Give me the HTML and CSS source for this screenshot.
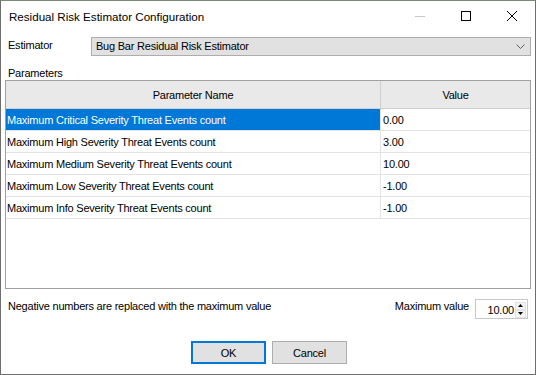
FILE: index.html
```html
<!DOCTYPE html>
<html>
<head>
<meta charset="utf-8">
<link rel="stylesheet" href="styles.css">
</head>
<body>
<div class="window">
  <div class="titlebar">
    <div class="title">Residual Risk Estimator Configuration</div>
    <div class="caption">
      <div class="cbtn min"><svg width="10" height="10" viewBox="0 0 10 10"><line x1="0" y1="5.5" x2="10" y2="5.5" stroke="#c8c8c8" stroke-width="1"/></svg></div>
      <div class="cbtn max"><svg width="10" height="10" viewBox="0 0 10 10"><rect x="0.5" y="0.5" width="9" height="9" fill="none" stroke="#000" stroke-width="1"/></svg></div>
      <div class="cbtn close"><svg width="10" height="10" viewBox="0 0 10 10"><path d="M0 0L10 10M10 0L0 10" stroke="#000" stroke-width="1"/></svg></div>
    </div>
  </div>
  <div class="content">
    <div class="est-row">
      <div class="est-label">Estimator</div>
      <div class="combo">
        <span class="combo-text">Bug Bar Residual Risk Estimator</span>
        <svg class="chev" width="9" height="5" viewBox="0 0 9 5"><path d="M0.5 0.5L4.5 4.5L8.5 0.5" fill="none" stroke="#606060" stroke-width="1"/></svg>
      </div>
    </div>
    <div class="params-label">Parameters</div>
    <div class="grid">
      <div class="ghead">
        <div class="hc name">Parameter Name</div>
        <div class="hc val">Value</div>
      </div>
      <div class="grow sel">
        <div class="c name">Maximum Critical Severity Threat Events count</div>
        <div class="c val">0.00</div>
      </div>
      <div class="grow">
        <div class="c name">Maximum High Severity Threat Events count</div>
        <div class="c val">3.00</div>
      </div>
      <div class="grow">
        <div class="c name">Maximum Medium Severity Threat Events count</div>
        <div class="c val">10.00</div>
      </div>
      <div class="grow">
        <div class="c name">Maximum Low Severity Threat Events count</div>
        <div class="c val">-1.00</div>
      </div>
      <div class="grow">
        <div class="c name">Maximum Info Severity Threat Events count</div>
        <div class="c val">-1.00</div>
      </div>
    </div>
    <div class="bottom-row">
      <div class="note">Negative numbers are replaced with the maximum value</div>
      <div class="maxval">
        <span class="mv-label">Maximum value</span>
        <div class="spin">
          <span class="spin-text">10.00</span>
          <div class="spin-btns">
            <div class="sb"><svg width="5" height="3" viewBox="0 0 5 3"><path d="M2.5 0L5 3H0Z" fill="#000"/></svg></div>
            <div class="sb"><svg width="5" height="3" viewBox="0 0 5 3"><path d="M0 0H5L2.5 3Z" fill="#000"/></svg></div>
          </div>
        </div>
      </div>
    </div>
    <div class="buttons">
      <div class="btn default">OK</div>
      <div class="btn">Cancel</div>
    </div>
  </div>
</div>
</body>
</html>
```
FILE: styles.css
```css
* { box-sizing: border-box; }
html, body { margin: 0; padding: 0; }
body {
  width: 536px;
  height: 375px;
  overflow: hidden;
  background: #3c5a3c;
  font-family: "Liberation Sans", Arial, sans-serif;
  font-size: 11px;
  letter-spacing: -0.22px;
  color: #000;
}
.window {
  width: 536px;
  height: 375px;
  background: #fff;
  border-left: 1px solid #6e6e6e;
  border-right: 1px solid #6e6e6e;
  border-bottom: 1px solid #6e6e6e;
  border-top: 1px solid #7a8a7a;
  display: flex;
  flex-direction: column;
}
.titlebar {
  height: 29px;
  display: flex;
  align-items: stretch;
  justify-content: space-between;
}
.title {
  padding-left: 8px;
  padding-top: 8px;
  font-size: 11.6px;
  letter-spacing: 0;
  line-height: 15px;
}
.caption { display: flex; }
.cbtn {
  width: 46px;
  display: flex;
  align-items: center;
  justify-content: center;
}
.cbtn svg { display: block; }
.content {
  flex: 1;
  display: flex;
  flex-direction: column;
  padding: 0 4px;
}
.est-row {
  display: flex;
  align-items: flex-start;
  margin-top: 7px;
  height: 20px;
}
.est-label {
  width: 86px;
  padding-left: 3px;
  line-height: 15px;
  padding-top: 1px;
}
.combo {
  flex: 1;
  height: 19px;
  background: #e1e1e1;
  border: 1px solid #adadad;
  display: flex;
  align-items: center;
  justify-content: space-between;
  padding: 0 5px 0 4px;
}
.combo-text { line-height: 15px; }
.chev { display: block; }
.params-label {
  margin-top: 9px;
  margin-bottom: 1px;
  padding-left: 3px;
  line-height: 15px;
  height: 15px;
}
.grid {
  margin-top: -2px;
  height: 209px;
  border: 1px solid #a0a0a0;
  background: #fff;
}
.ghead {
  display: flex;
  height: 28px;
  background: #e9e9e9;
  border-bottom: 1px solid #cfcfcf;
}
.hc {
  display: flex;
  align-items: center;
  justify-content: center;
}
.name { width: 375px; }
.val { flex: 1; }
.hc.name { border-right: 1px solid #cfcfcf; }
.grow {
  display: flex;
  height: 22px;
  border-bottom: 1px solid #e3e3e3;
}
.c {
  display: flex;
  align-items: center;
  padding-left: 1px;
}
.c.name { border-right: 1px solid #e3e3e3; }
.c.val { padding-left: 2px; }
.grow.sel .c.name {
  background: #0078d7;
  color: #fff;
}
.bottom-row {
  display: flex;
  justify-content: space-between;
  align-items: flex-start;
  margin-top: 9px;
  height: 22px;
}
.note {
  padding-left: 3px;
  padding-top: 2px;
  line-height: 13px;
}
.maxval {
  display: flex;
  align-items: flex-start;
  gap: 6px;
}
.mv-label {
  padding-top: 2px;
  line-height: 13px;
}
.spin {
  width: 53px;
  height: 20px;
  margin-top: 1px;
  border: 1px solid #c8c8c8;
  display: flex;
  align-items: center;
  justify-content: flex-end;
  margin-right: 3px;
  padding-top: 1px;
}
.spin-text { padding-right: 1px; }
.spin-btns {
  display: flex;
  flex-direction: column;
  width: 11px;
  height: 16px;
  margin-right: 1px;
}
.sb {
  flex: 1;
  display: flex;
  align-items: center;
  justify-content: center;
  background: #f4f4f4;
  border: 1px solid #e2e2e2;
}
.sb svg { display: block; }
.buttons {
  display: flex;
  justify-content: center;
  gap: 6px;
  margin-top: 21px;
  padding-left: 2px;
}
.btn {
  width: 75px;
  height: 23px;
  background: #e1e1e1;
  border: 1px solid #adadad;
  display: flex;
  align-items: center;
  justify-content: center;
}
.btn.default {
  border: 2px solid #0078d7;
}
```
